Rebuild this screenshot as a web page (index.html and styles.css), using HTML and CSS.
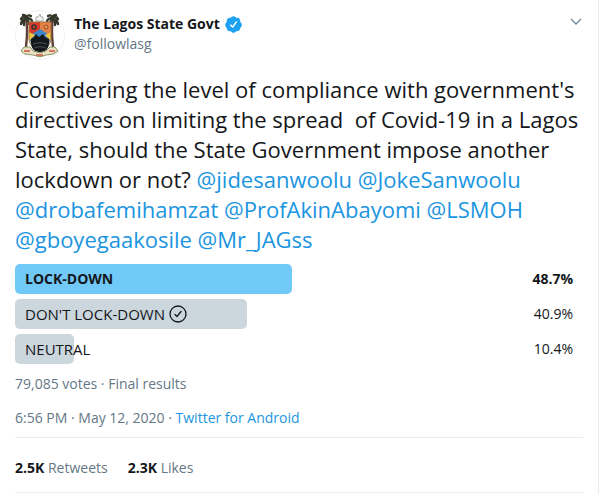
FILE: index.html
```html
<!DOCTYPE html>
<html lang="en">
<head>
  <meta charset="UTF-8" />
  <meta name="viewport" content="width=device-width, initial-scale=1" />
  <title>The Lagos State Govt on Twitter</title>
  <link rel="stylesheet" href="styles.css">
</head>
<body>
  <article class="tweet">
    <header class="tweet-header">
      <svg class="avatar" viewBox="0 0 50 50" aria-hidden="true">
        <circle cx="25" cy="25" r="24.5" fill="#fff" stroke="#eef0f1" />
        <!-- palm trees -->
        <g fill="none" stroke="#5e4036" stroke-width="2.4">
          <path d="M11 10 C13 18 12 28 11 37" />
          <path d="M38 10 C36 18 37 28 38 37" />
        </g>
        <g fill="none" stroke="#34382a" stroke-width="2.4" stroke-linecap="round">
          <path d="M11 8 Q8 5 6 9 M11 9 Q7 9 6 14 M11 8 Q8 11 9 15 M11 8 Q11 5 8 5 M11 8 Q13 4 16 6 M11 8 Q16 8 17 11 M11 8 Q14 11 14 14" />
          <path d="M38 8 Q41 5 43 9 M38 9 Q42 9 43 14 M38 8 Q41 11 40 15 M38 8 Q38 5 41 5 M38 8 Q36 4 33 6 M38 8 Q33 8 32 11 M38 8 Q35 11 35 14" />
        </g>
        <path d="M21 11 L21 7 L23 7 L25 4 L26 7 L28 7 L28 11 Z" fill="#f3f3f3" stroke="#aaa" />
        <!-- shield -->
        <path d="M14 12 H25 V20 L14 28 Z" fill="#d63a2a" />
        <path d="M25 12 H36 V28 L25 20 Z" fill="#e58246" />
        <path d="M14 26 L25 19 L36 26 L34 34 H16 Z" fill="#3d86c9" />
        <path d="M14 22 L20 25 L14 31 Z M36 22 L30 25 L36 31 Z" fill="#f0c43e" />
        <path d="M14 12 H36 V30 Q34 38 25 42 Q16 38 14 30 Z" fill="none" stroke="#a3703e" />
        <circle cx="19" cy="17" r="2" fill="#d9402c" stroke="#333" stroke-width="1.5" />
        <circle cx="31" cy="17" r="2" fill="#e9a04b" stroke="#9a4a2a" />
        <path d="M16 29 L19 27 L21 24 L24 27 L28 24 L30 27 L34 29 Q35 42 25 42 Q15 42 16 29 Z" fill="#15191c" />
        <path d="M18 34 Q25 31 32 34 M19 38 Q25 35 31 38" fill="none" stroke="#46525c" />
        <!-- ribbon -->
        <path d="M6 41 L9 37 L15 37 L18 41 L25 43 L31 41 L35 37 L40 37 L43 41 L38 44 L31 45 L25 47 L18 45 L10 44 Z" fill="#eee0c4" stroke="#87965f" />
        <path d="M9 41 L15 41 M34 41 L40 41 M21 45 L28 45" stroke="#c95443" stroke-width="1.5" />
      </svg>
      <div class="author">
        <div class="author-name">
          <a href="#">The Lagos State Govt</a>
          <svg class="verified" viewBox="0 0 24 24" role="img" aria-label="Verified account">
            <path fill="#1da1f2" d="M22.5 12.5c0-1.58-.875-2.95-2.148-3.6.154-.435.238-.905.238-1.4 0-2.21-1.71-3.998-3.818-3.998-.47 0-.92.084-1.336.25C14.818 2.415 13.51 1.5 12 1.5s-2.816.917-3.437 2.25c-.415-.165-.866-.25-1.336-.25-2.11 0-3.818 1.79-3.818 4 0 .494.083.964.237 1.4-1.272.65-2.147 2.018-2.147 3.6 0 1.495.782 2.798 1.942 3.486-.02.17-.032.34-.032.514 0 2.21 1.708 4 3.818 4 .47 0 .92-.086 1.335-.25.62 1.334 1.926 2.25 3.437 2.25 1.512 0 2.818-.916 3.437-2.25.415.163.865.248 1.336.248 2.11 0 3.818-1.79 3.818-4 0-.174-.012-.344-.033-.513 1.158-.687 1.943-1.99 1.943-3.484z" />
            <path fill="none" stroke="#fff" stroke-width="1.8" stroke-linecap="round" stroke-linejoin="round" d="M8.5 12.8 L11 15.2 L15.7 8.7" />
          </svg>
        </div>
        <a class="handle" href="#">@followlasg</a>
      </div>
      <button class="more" type="button" aria-label="More">
        <svg viewBox="0 0 12 8" aria-hidden="true">
          <path d="M1 1 L6 6 L11 1" fill="none" stroke="#7b8d9b" stroke-width="1.5" />
        </svg>
      </button>
    </header>

    <p class="tweet-text">Considering the level of compliance with government's directives on limiting the spread&nbsp; of Covid-19 in a Lagos State, should the State Government impose another lockdown or not? <a href="#">@jidesanwoolu</a> <a href="#">@JokeSanwoolu</a> <a href="#">@drobafemihamzat</a> <a href="#">@ProfAkinAbayomi</a> <a href="#">@LSMOH</a> <a href="#">@gboyegaakosile</a> <a href="#">@Mr_JAGss</a></p>

    <ul class="poll">
      <li class="choice winner">
        <div class="bar" style="width: 48.7%"></div>
        <span class="label">LOCK-DOWN</span>
        <span class="percent">48.7%</span>
      </li>
      <li class="choice">
        <div class="bar" style="width: 40.9%"></div>
        <span class="label">DON'T LOCK-DOWN</span>
        <svg class="voted" viewBox="0 0 18 18" role="img" aria-label="Your vote">
          <circle cx="9" cy="9" r="8" fill="none" stroke="#14171a" stroke-width="1.3" />
          <path d="M6 9.5 L8 11.5 L12 6.5" fill="none" stroke="#14171a" stroke-width="1.3" stroke-linecap="round" />
        </svg>
        <span class="percent">40.9%</span>
      </li>
      <li class="choice">
        <div class="bar" style="width: 10.4%"></div>
        <span class="label">NEUTRAL</span>
        <span class="percent">10.4%</span>
      </li>
    </ul>

    <p class="info">79,085 votes · Final results</p>
    <p class="info date">6:56 PM · May 12, 2020 · <a href="#">Twitter for Android</a></p>

    <div class="stats">
      <a href="#"><strong>2.5K</strong> Retweets</a>
      <a href="#"><strong>2.3K</strong> Likes</a>
    </div>
  </article>
</body>
</html>
```
FILE: styles.css
```css
* {
  box-sizing: border-box;
}
body {
  margin: 0;
  background: #fff;
  color: #14171a;
  font-family: "Segoe UI", "Open Sans", sans-serif;
  font-size: 14px;
  line-height: 20px;
}
a {
  color: #1b95e0;
  text-decoration: none;
}
.tweet {
  min-height: 100vh;
  margin-right: 1px;
  padding: 10px 15px 0;
  border-right: 1px solid #e6ecf0;
}
.tweet-header {
  display: flex;
  align-items: flex-start;
}
.avatar {
  width: 50px;
  height: 50px;
}
.author {
  flex: 1;
  padding: 4px 0 0 9px;
}
.author-name {
  display: flex;
  align-items: center;
  gap: 4px;
  font-weight: bold;
}
.author-name a {
  color: #14171a;
}
.verified {
  width: 19px;
  height: 19px;
}
.author .handle {
  display: block;
  color: #657786;
}
.more {
  padding: 8px 1px;
  border: none;
  background: none;
  cursor: pointer;
}
.more svg {
  display: block;
  width: 12px;
  height: 8px;
}
.tweet-text {
  margin: 14px 0 10px;
  font-size: 22px;
  line-height: 30px;
}
.poll {
  display: grid;
  gap: 5px;
  margin: 0;
  padding: 0;
  list-style: none;
}
.choice {
  position: relative;
  display: flex;
  align-items: center;
  gap: 4px;
  height: 30px;
  padding: 0 10px;
}
.bar {
  position: absolute;
  top: 0;
  left: 0;
  height: 100%;
  border-radius: 5px;
  background: #ccd6dd;
}
.label,
.voted,
.percent {
  position: relative;
}
.label {
  font-size: 15px;
}
.winner .label {
  font-size: 14px;
}
.voted {
  width: 18px;
  height: 18px;
}
.percent {
  margin-left: auto;
}
.winner {
  font-weight: bold;
}
.winner .bar {
  background: #71c9f8;
}
.info {
  margin: 10px 0 0;
  color: #657786;
}
.date {
  margin-top: 14px;
}
.stats {
  display: flex;
  gap: 20px;
  margin-top: 9px;
  padding: 20px 0 14px;
  border: solid #e6ecf0;
  border-width: 1px 0;
}
.stats a {
  color: #657786;
}
.stats strong {
  color: #14171a;
}
```
